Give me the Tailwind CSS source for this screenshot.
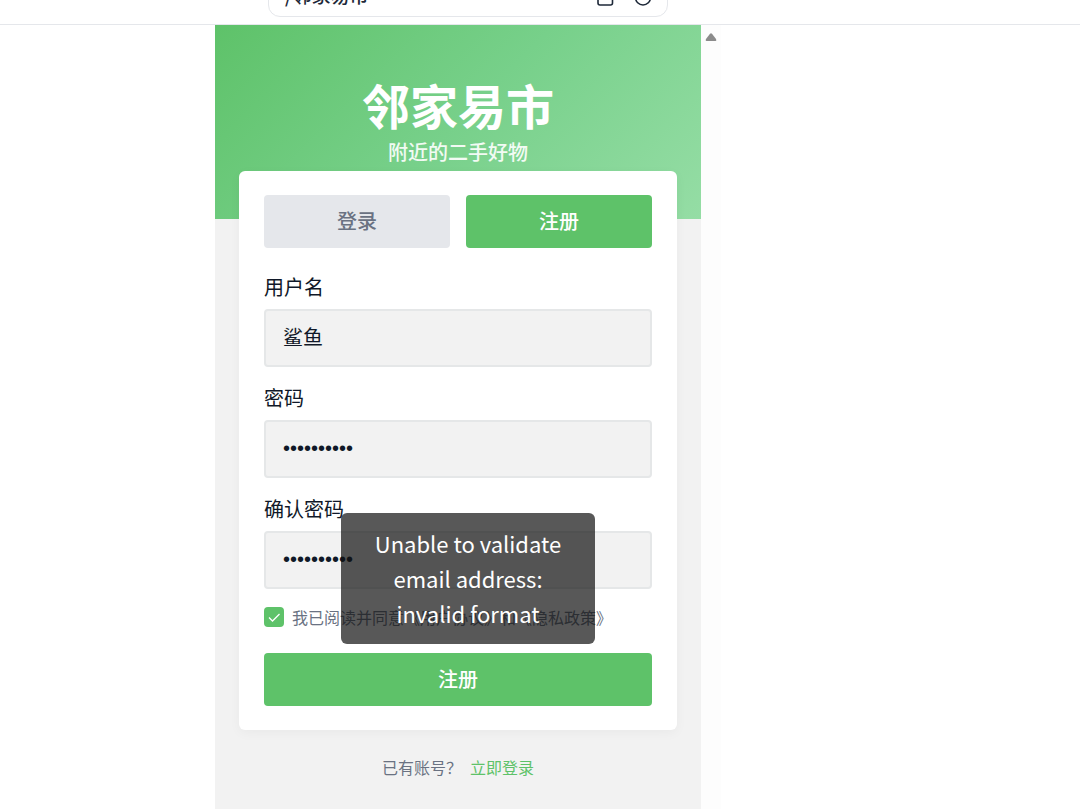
<!DOCTYPE html>
<html lang="zh-CN">
<head>
    <meta charset="UTF-8">
    <meta name="viewport" content="width=device-width, initial-scale=1.0">
    <title>邻家易市</title>
    <script src="https://cdn.jsdelivr.net/npm/@tailwindcss/browser@4"></script>
</head>
<body class="flex h-screen flex-col overflow-hidden bg-white font-['Noto_Sans_CJK_SC',sans-serif] text-gray-900">
    <!-- 地址栏 -->
    <header class="flex h-[25px] shrink-0 flex-col items-center justify-end overflow-hidden border-b border-gray-200 pr-36 pb-[7px]">
        <div class="flex h-10 w-[400px] shrink-0 items-center justify-between rounded-xl border border-gray-200 pr-[14px] pl-4">
            <span class="pb-1 text-[19px] leading-7 font-medium text-gray-800">/邻家易市</span>
            <div class="flex gap-[18px] text-gray-800">
                <button type="button" aria-label="复制">
                    <svg class="size-5" viewBox="0 0 20 20" fill="none" stroke="currentColor" stroke-width="1.6"><rect x="3" y="3" width="14.500" height="15" rx="2"/></svg>
                </button>
                <button type="button" aria-label="刷新">
                    <svg class="size-5" viewBox="0 0 20 20" fill="none" stroke="currentColor" stroke-width="1.6"><circle cx="10" cy="10.500" r="7.500"/></svg>
                </button>
            </div>
        </div>
    </header>

    <!-- 预览区 -->
    <div class="flex min-h-0 flex-1 justify-center pr-36">
        <div class="relative flex w-full max-w-[506px]">
            <main class="flex-1 bg-[#f2f2f2]">
                <!-- 顶部横幅 -->
                <div class="h-[194px] bg-linear-135 from-[#5ec269] via-[#77d08a] to-[#95dda5] pt-12 text-center text-white">
                    <h1 class="text-5xl leading-[62px] font-bold">邻家易市</h1>
                    <p class="pt-[2px] text-xl leading-[30px] font-medium text-white/90">附近的二手好物</p>
                </div>

                <!-- 注册表单 -->
                <form class="relative mx-6 -mt-12 rounded-md bg-white px-[25px] py-6 shadow-[0_3px_12px_rgba(0,0,0,0.04)]">
                    <div class="mb-6 flex gap-4 text-xl font-medium">
                        <button type="button" class="h-[53px] flex-1 rounded bg-gray-200 pb-[2px] text-gray-500">登录</button>
                        <button type="button" class="h-[53px] flex-1 rounded bg-[#5ec269] pb-[2px] text-white">注册</button>
                    </div>

                    <div class="space-y-4 text-xl">
                        <div>
                            <label for="username" class="mb-2 block leading-[29px]">用户名</label>
                            <input type="text" id="username" value="鲨鱼" class="block h-[58px] w-full rounded border-2 border-[#e5e7e8] bg-[#f2f2f2] px-[17px] pb-1">
                        </div>
                        <div>
                            <label for="password" class="mb-2 block leading-[29px]">密码</label>
                            <input type="password" id="password" value="1234567890" class="block h-[58px] w-full rounded border-2 border-[#e5e7e8] bg-[#f2f2f2] px-[17px] pb-[2px] font-['Liberation_Sans',sans-serif]">
                        </div>
                        <div>
                            <label for="confirm" class="mb-2 block leading-[29px]">确认密码</label>
                            <input type="password" id="confirm" value="1234567890" class="block h-[58px] w-full rounded border-2 border-[#e5e7e8] bg-[#f2f2f2] px-[17px] pb-[2px] font-['Liberation_Sans',sans-serif]">
                        </div>
                    </div>

                    <div class="mt-4 mb-6 flex items-center gap-2">
                        <span class="relative size-5 shrink-0">
                            <input type="checkbox" id="agree" checked class="block size-5 appearance-none rounded bg-[#5ec269]">
                            <svg class="pointer-events-none absolute inset-0 size-5" viewBox="0 0 20 20" fill="none" stroke="white" stroke-width="1.3"><path d="M5 10.500l3.500 3.500L15.500 7"/></svg>
                        </span>
                        <label for="agree" class="whitespace-nowrap text-base text-gray-500">我已阅读并同意《用户协议》和《隐私政策》</label>
                    </div>

                    <button type="submit" class="h-[53px] w-full rounded bg-[#5ec269] pb-[2px] text-xl font-medium text-white">注册</button>
                </form>

                <p class="mt-[25px] flex justify-center gap-2 text-base text-gray-500">
                    <span>已有账号？</span>
                    <a href="#" class="text-[#5ec269]">立即登录</a>
                </p>
            </main>

            <!-- 滚动条 -->
            <div class="w-5 bg-[#fdfdfd] pt-2 pl-1">
                <svg class="h-2 w-3" viewBox="0 0 12 8" fill="#8b8b8b"><path d="M5 .8Q6-.4 7 .8L11 6Q11.800 8 10.500 8H1.500Q.2 8 1 6z"/></svg>
            </div>

            <!-- 提示 -->
            <div role="alert" class="absolute top-[488px] left-1/2 w-[254px] -translate-x-1/2 rounded-md bg-[#111111]/70 px-8 py-[13px] text-center text-[22px] leading-[35px] text-white">
                Unable to validate email address: invalid format
            </div>
        </div>
    </div>
</body>
</html>
